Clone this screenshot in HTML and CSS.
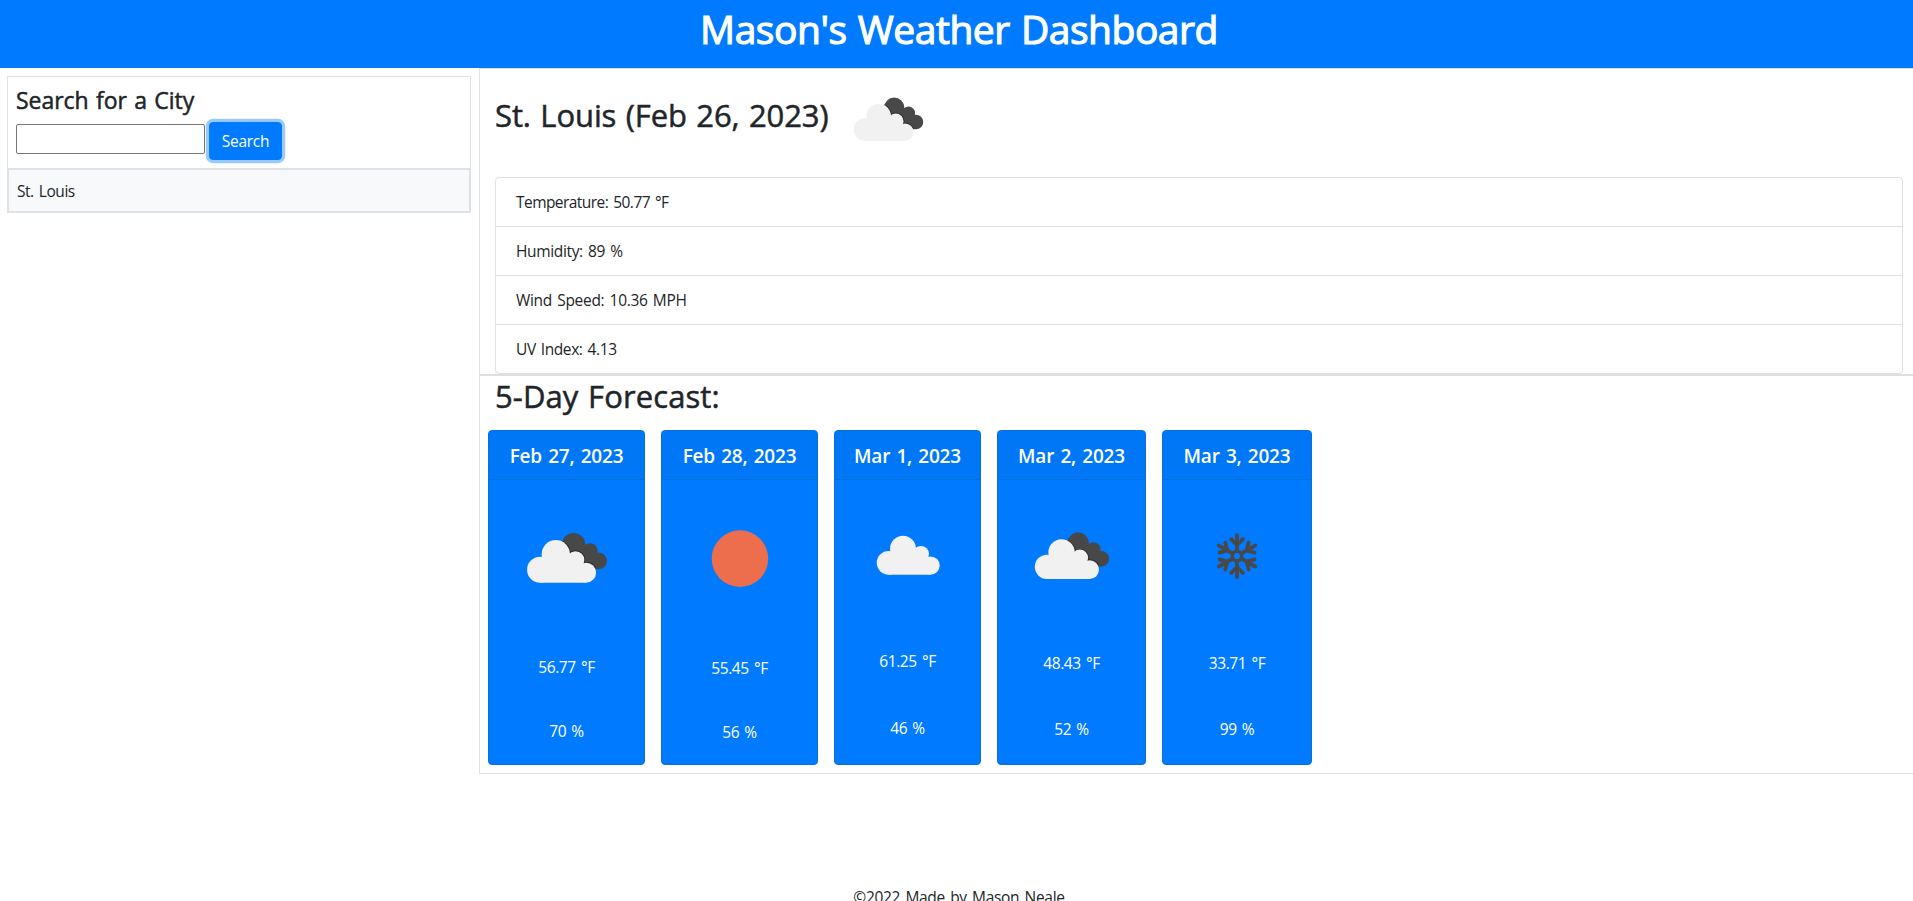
FILE: index.html
```html
<!DOCTYPE html>
<html lang="en">
<head>
<meta charset="utf-8">
<title>Weather Dashboard</title>
<link rel="stylesheet" href="styles.css">
</head>
<body>
<svg class="defs" aria-hidden="true">
  <defs>
    <g id="cloud-shape">
      <circle cx="27" cy="60.6" r="11.3"/>
      <circle cx="40.7" cy="47.1" r="12.3"/>
      <circle cx="57.8" cy="52.2" r="7.7"/>
      <circle cx="67" cy="63.2" r="8.7"/>
      <path d="M27 71.9V55l5-6h25l6 8 4 14.9z"/>
    </g>
    <clipPath id="back-clip">
      <circle cx="56.2" cy="38.7" r="10.1"/>
      <circle cx="70.5" cy="44.1" r="6.6"/>
      <circle cx="77.9" cy="53" r="7.3"/>
      <path d="M50 45l16-5 8 5 4 15.3-12-1z"/>
    </clipPath>
    <symbol id="broken-clouds" viewBox="0 0 100 100">
      <g clip-path="url(#back-clip)">
        <rect width="100" height="100" fill="#484848"/>
        <use href="#cloud-shape" fill="#2c2c2c" stroke="#2c2c2c" stroke-width="1.8"/>
      </g>
      <use href="#cloud-shape" fill="#f1f1f1"/>
    </symbol>
    <symbol id="cloud" viewBox="0 0 100 100">
      <use href="#cloud-shape" fill="#f1f1f1" transform="translate(5 -.8)"/>
    </symbol>
    <symbol id="sun" viewBox="0 0 100 100"><circle cx="50.4" cy="51" r="24.6" fill="#ec6e4c"/></symbol>
    <g id="arm"><path d="M0-4.5V-19.4M-5.4-15.6L0-10.4L5.4-15.6"/></g>
    <symbol id="snow" viewBox="0 0 100 100">
      <g transform="translate(50 51.9)" fill="none" stroke="#484848" stroke-width="3.6" stroke-linecap="round">
        <circle r="4.5" stroke-width="3"/>
        <use href="#arm"/><use href="#arm" transform="rotate(60)"/><use href="#arm" transform="rotate(120)"/>
        <use href="#arm" transform="rotate(180)"/><use href="#arm" transform="rotate(240)"/><use href="#arm" transform="rotate(300)"/>
      </g>
    </symbol>
  </defs>
</svg>
<header class="topbar"><h1 class="topbar-title">Mason's Weather Dashboard</h1></header>
<main class="layout">
  <aside class="sidebar">
    <section class="search">
      <h2 class="search-title">Search for a City</h2>
      <div class="search-row">
        <input class="search-input" type="text" aria-label="City">
        <button class="search-button">Search</button>
      </div>
    </section>
    <div class="history">St. Louis</div>
  </aside>
  <div class="content">
    <section class="current">
      <div class="current-head">
        <h2 class="current-title">St. Louis (Feb 26, 2023)</h2>
        <svg class="current-icon"><use href="#broken-clouds"/></svg>
      </div>
      <ul class="stats">
        <li class="stat stat-temperature">Temperature: 50.77 °F</li>
        <li class="stat">Humidity: 89 %</li>
        <li class="stat stat-wind">Wind Speed: 10.36 MPH</li>
        <li class="stat">UV Index: 4.13</li>
      </ul>
    </section>
    <section class="forecast">
      <h2 class="forecast-title">5-Day Forecast:</h2>
      <div class="cards">
        <article class="card card-1"><h3 class="card-date">Feb 27, 2023</h3><div class="card-body"><svg class="card-icon"><use href="#broken-clouds"/></svg><p class="temp">56.77 °F</p><p class="humidity">70 %</p></div></article>
        <article class="card card-2"><h3 class="card-date">Feb 28, 2023</h3><div class="card-body"><svg class="card-icon"><use href="#sun"/></svg><p class="temp">55.45 °F</p><p class="humidity">56 %</p></div></article>
        <article class="card card-3"><h3 class="card-date">Mar 1, 2023</h3><div class="card-body"><svg class="card-icon"><use href="#cloud"/></svg><p class="temp">61.25 °F</p><p class="humidity">46 %</p></div></article>
        <article class="card card-4"><h3 class="card-date">Mar 2, 2023</h3><div class="card-body"><svg class="card-icon"><use href="#broken-clouds"/></svg><p class="temp">48.43 °F</p><p class="humidity">52 %</p></div></article>
        <article class="card card-5"><h3 class="card-date">Mar 3, 2023</h3><div class="card-body"><svg class="card-icon"><use href="#snow"/></svg><p class="temp">33.71 °F</p><p class="humidity">99 %</p></div></article>
      </div>
    </section>
  </div>
</main>
<footer class="footer">©2022 Made by Mason Neale</footer>
</body>
</html>
```
FILE: styles.css
```css
* { box-sizing: border-box; }
body {
  margin: 0;
  height: 901px;
  overflow: hidden;
  background: #fff;
  color: #212529;
  font: 400 15.5px/24px "Open Sans", "Noto Sans", sans-serif;
  letter-spacing: -0.35px;
  word-spacing: 1.5px;
}
h1, h2, h3, p, ul { margin: 0; padding: 0; font-weight: 400; }
h2 { -webkit-text-stroke: 0.5px currentColor; }
svg { display: block; }
.defs { position: absolute; width: 0; height: 0; }

.topbar { height: 68px; padding: 5px 0 0 5px; background: #007bff; color: #fff; text-align: center; }
.topbar-title { font-size: 39px; line-height: 48px; letter-spacing: -0.47px; -webkit-text-stroke: 1.1px currentColor; }

.layout { display: flex; height: 706px; }
.sidebar { width: 479px; padding: 8px 8px 0 7px; }
.search { height: 92px; padding: 8px; border: 1px solid #dee2e6; border-bottom: 0; }
.search-title { padding-top: 1px; font-size: 23px; line-height: 29px; letter-spacing: -0.05px; }
.search-row { display: flex; gap: 4px; margin-top: 7px; }
.search-input { width: 189px; height: 30px; margin-top: 2px; border: 1px solid #767676; border-radius: 2px; }
.search-button {
  width: 73px; height: 38px; padding: 0;
  border: 1px solid #007bff; border-radius: 4px;
  background: #007bff; color: #fff;
  font: inherit; letter-spacing: -0.3px;
  box-shadow: 0 0 0 3.2px rgba(0, 123, 255, .4);
}
.history { height: 45px; padding: 9px 8px; border: 2px solid #dee2e6; background: #f8f9fa; letter-spacing: -0.45px; }

.content { flex: 1; border-left: 1px solid #dee2e6; }
.current { height: 307px; padding: 0 10px 0 15px; border-top: 1px solid #dee2e6; border-bottom: 1px solid #dfdfdf; }
.current-head { display: flex; height: 108px; }
.current-title { padding-top: 26px; font-size: 31px; line-height: 40px; letter-spacing: -0.1px; width: 343px; white-space: nowrap; }
.current-icon { width: 100px; height: 100px; }
.stats { list-style: none; border: 1px solid #dfdfdf; border-radius: 4px; height: 197px; }
.stat { height: 49px; padding: 12px 20px; border-bottom: 1px solid #dfdfdf; }
.stat:last-child { border-bottom: 0; letter-spacing: -0.42px; }
.stat-temperature { letter-spacing: -0.55px; }
.stat-wind { letter-spacing: -0.3px; }

.forecast { height: 399px; border-top: 1px solid #dfdfdf; border-bottom: 1px solid #dee2e6; }
.forecast-title { height: 54px; padding: 0 0 0 15px; font-size: 31px; line-height: 40px; letter-spacing: 0.1px; }
.cards { display: flex; gap: 16px; padding-left: 8px; }
.card { height: 335px; border: 1px solid #0b6fd8; border-radius: 4px; background: #007bff; color: #fff; text-align: center; }
.card-date { height: 49px; padding-top: 13px; border-bottom: 1px solid #006fe0; background: #0077f7; border-radius: 3px 3px 0 0; font-size: 19px; line-height: 25px; font-weight: 600; letter-spacing: -0.2px; }
.card-body { display: flex; flex-direction: column; align-items: center; padding-top: 20px; }
.card-icon { width: var(--icon); height: var(--icon); }
.temp { margin-top: var(--drop); letter-spacing: -0.4px; }
.humidity { margin-top: var(--gap); }
.card-1 { width: 157px; --icon: 115px; --drop: 40px; --gap: 40px; }
.card-2 { width: 157px; --icon: 115px; --drop: 41px; --gap: 40px; }
.card-3 { width: 147px; --icon: 105px; --drop: 44px; --gap: 43px; }
.card-4 { width: 149px; --icon: 107px; --drop: 42px; --gap: 42px; }
.card-4 .card-body { padding-top: 22px; }
.card-5 { width: 150px; --icon: 108px; --drop: 43px; --gap: 42px; }

.footer { padding: 111px 0 0 5px; text-align: center; height: 127px; letter-spacing: -0.3px; }
```
